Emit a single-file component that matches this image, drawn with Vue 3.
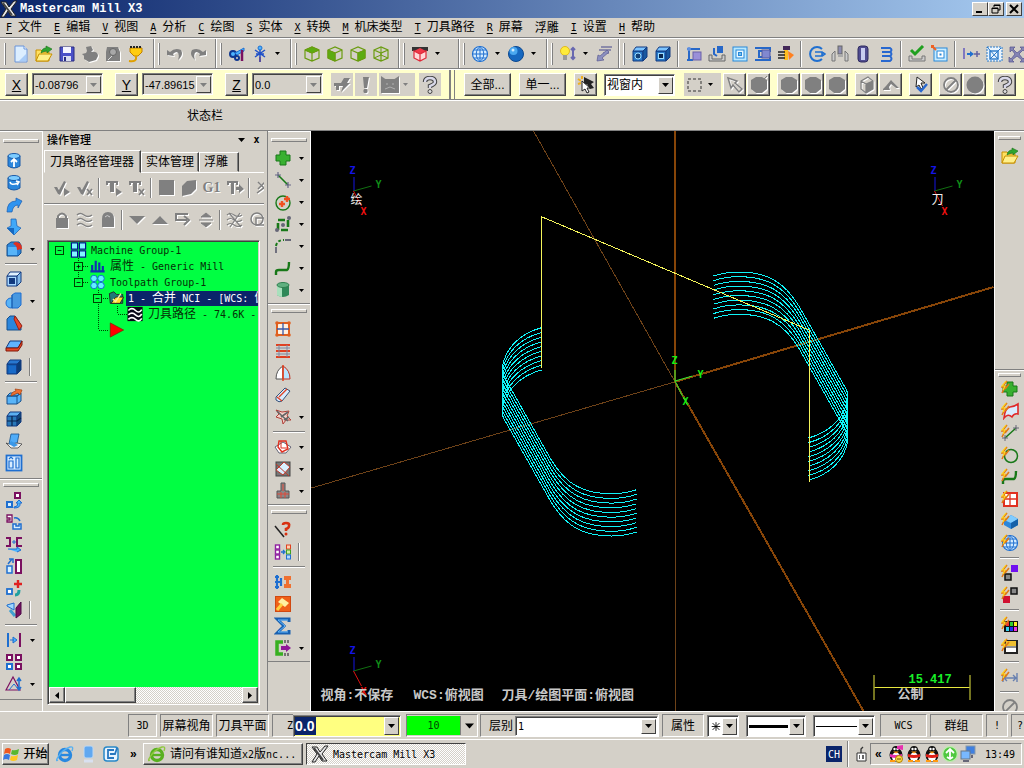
<script setup>
import { h } from 'vue'

const p = (d, fill = 'none', stroke = 'none', w = 1) =>
  `<path d="${d}" fill="${fill}" stroke="${stroke}" stroke-width="${w}"/>`
const c = (x, y, r, fill = 'none', stroke = 'none', w = 1) =>
  `<circle cx="${x}" cy="${y}" r="${r}" fill="${fill}" stroke="${stroke}" stroke-width="${w}"/>`
const r = (x, y, w, ht, fill = 'none', stroke = 'none', sw = 1) =>
  `<rect x="${x}" y="${y}" width="${w}" height="${ht}" fill="${fill}" stroke="${stroke}" stroke-width="${sw}"/>`

const G = '#808080'
const olive = '#6a9c10'
const blue = '#1f6fd0'
const navy = '#123a80'
const sky = '#4db4ff'
const plum = '#7a1060'
const bolt = p('M6 1L1 7H4L1 13M8 4L4 9', 'none', '#e07818', 1.6) + p('M5 1L1 6H4L2 10', 'none', '#ffd820', 1.2)
const wire = (s) => p('M2 5L9 2L16 5V13L9 16L2 13ZM2 5L9 8L16 5M9 8V16', 'none', s, 1.2)
const block = (front, top, side) =>
  p('M2 6H12V16H2Z', front, navy) + p('M2 6L5 2H16L12 6Z', top, navy) + p('M12 6L16 2V12L12 16Z', side, navy)
const cyl = p('M3 4V14Q9 18 15 14V4Z', '#2b86dc', '#1a5aa8') + '<ellipse cx="9" cy="4" rx="6" ry="2.5" fill="#7cccff" stroke="#1a5aa8"/>'
const globe = c(9, 9, 7.5, '#d4ecff', blue, 1.2) + p('M1.500 9H16.500M9 1.500V16.500M3 5H15M3 13H15M9 1.500C4 5 4 13 9 16.500C14 13 14 5 9 1.500', 'none', blue)
const hex = p('M6 1H12L17 4V13L12 17H6L1 13V4Z', G)
const penguin = (scarf) =>
  '<ellipse cx="9" cy="10" rx="6.500" ry="7" fill="#111"/>' + c(9, 5, 4, '#111') +
  '<ellipse cx="9" cy="12" rx="4" ry="4.500" fill="#fff"/>' + c(7.5, 4, 1.2, '#fff') + c(10.5, 4, 1.2, '#fff') +
  p('M6 6.500H12L9 8.500Z', '#ff9a10') + p('M3 9Q9 11 15 9V12Q9 14 3 12Z', scarf) + r(3, 15, 5, 2, '#ff9a10') + r(10, 15, 5, 2, '#ff9a10')
const plus = (col, edge) => p('M6 2H12V6H16V12H12V16H6V12H2V6H6Z', col, edge)

const icons = {
  logo: p('M1 2H6L9 7L14 1H17L11 9L16 16H11L8 11L4 17H1L6 9Z', '#e8e8e8', '#222', 1) + p('M3 3L12 15', 'none', '#444', 2),
  new: p('M3 1H12L15 4V17H3Z', '#dceeff', '#6a94d8') + p('M12 1V4H15', '#fff', '#6a94d8') + p('M7 16L14 9V16Z', '#a8ccf8'),
  open: p('M1 5H6L8 7H14V16H1Z', '#ffe060', '#c89000') + p('M1 16L4 9H17L13 16Z', '#fff08a', '#c89000') + p('M6 8Q7 3 11 3V1L17 4L12 8V6Q9 6 6 8Z', '#2fa52f', '#187018', 0.6),
  save: p('M2 2H16V16H2Z', '#4a50c8', '#2a2c80') + r(5, 2, 8, 6, '#f4f4ff') + r(5, 11, 8, 5, '#d8dcf0') + r(6, 12, 2, 4, '#2a2c80'),
  print: p('M5 2L10 1L12 5L10 7Q17 6 17 11L15 15L8 17L3 14V11L1 9L5 8L6 6Z', G),
  preview: p('M3 2H14L16 7V16H2V7Z', G) + c(9, 7, 3.5, '#a8a8a8', '#666') + p('M4 15L8 11', 'none', '#ddd'),
  trophy: p('M3 3H15V7L11 11H7L3 7Z', '#ffcc10', '#c08000') + p('M4 1V3M7 1V3M10 1V3M13 1V3', 'none', '#222', 2) + p('M9 11V14Q8 17 2 16', 'none', '#e0a000', 2),
  undo: p('M1 10V5L4 7Q9 2 15 5Q18 10 12 15Q14 9 11 7Q9 7 7 9L8 11Z', G),
  redo: p('M17 10V5L14 7Q9 2 3 5Q0 10 6 15Q4 9 7 7Q9 7 11 9L10 11Z', G),
  erase: c(5, 9, 3, sky, '#103890', 2) + c(9, 13, 2, 'none', '#103890', 2) + p('M7 8L16 3V6L9 10Z', sky, blue) + p('M14 5V16', 'none', plum, 2.5),
  analyze: p('M9 2V16M4 5L14 12M14 5L4 12M5 9H13', 'none', '#2050c8', 1.5) + c(9, 3, 2, sky, blue) + p('M9 12V17', 'none', '#5a50a0', 2),
  cube1: wire(olive) + p('M2 5L9 2L16 5L9 8Z', '#5cac10', olive),
  cube2: wire(olive) + p('M2 5L9 8V16L2 13Z', '#5cac10', olive),
  cube3: wire(olive) + p('M9 8L16 5V13L9 16Z', '#5cac10', olive),
  cube4: wire(olive) + p('M2 13L9 10L16 13M9 2V10', 'none', olive),
  redcube: p('M1 2H17V6H1Z', '#333') + p('M3 6L9 3L15 6L9 9Z', '#f03848') + p('M3 6L9 9L15 6V13L9 16L3 13ZM9 9V16', '#ffd8d8', '#e02838', 1.2),
  globe,
  sphere: c(9, 9, 7.5, '#1668c0', '#0c4890') + c(6.5, 6, 4, '#4aa8f0') + c(6, 5, 1.5, '#d0ecff'),
  bulb: c(6, 6, 4.5, '#ffec3a', '#e0b820') + r(4, 10, 4, 5, '#999') + p('M14 3V14M12 5L14 3L16 5M12 12L14 14L16 12', 'none', '#6868b0', 2),
  dims: p('M6 2H17M4 5H16M8 8H14', 'none', '#7474a0', 1.5) + p('M14 7L7 13L9 15L2 16L3 10L5 11L12 5Z', '#8c90c0', '#5a5a90', 0.7),
  boxhole: block('#2878c8', '#7cc4ff', '#1858a0') + c(7, 11, 3, '#124078', '#9cdcff'),
  boxsq: block('#2878c8', '#7cc4ff', '#1858a0') + r(4.5, 8.5, 5, 5, '#0c2850', '#9cdcff'),
  tp1: p('M2 4H15M4 4V15M2 15H8', 'none', '#2868c8', 2) + c(4, 4, 2, '#6090e0') + r(8, 7, 8, 8, '#9a90d8', '#6a60a8'),
  tp2: r(9, 1, 6, 7, '#2868c8') + p('M6 3V9L9 11', 'none', '#2868c8', 2) + p('M1 10H4V14H14V10H17V16H1Z', '#ccc', '#666'),
  tp3: r(2, 2, 14, 14, '#b8e8ff', '#2888d8') + r(5, 5, 8, 8, '#e8f8ff', '#2888d8') + r(7.5, 7.5, 3, 3, '#70c0f0', '#2888d8'),
  tp4: p('M1 3H16V6H5V12H16V15H1', 'none', '#2868c8', 2) + r(8, 5, 8, 8, '#8088d0', '#5058a0'),
  tp5: r(6, 1, 7, 4, '#442858') + p('M9 5V15', 'none', '#ffbe20', 4) + p('M1 7H8M1 10H8M1 13H8', 'none', '#222', 1.5) + p('M11 6L17 10L12 15Z', '#ff8020'),
  lathe1: p('M14 4A7 7 0 1 0 14 14', 'none', blue, 2) + p('M7 7H14V11H7M14 7L17 9L14 11', 'none', blue, 1.6),
  lathe2: r(7, 1, 4, 8, '#8c8cb0', '#666') + p('M7 9H12V12H7Z', '#aaa') + p('M4 6L1 9V16H4ZM14 6L17 9V16H14Z', '#ccc', '#777'),
  lathe3: '<rect x="4" y="1" width="10" height="16" rx="3" fill="#504c90" stroke="#302c60"/>' + r(7, 3, 4, 12, '#c8ccf0'),
  lathe4: p('M4 3H13Q16 5 13 7H5M5 7H13Q16 9 13 11H5M5 11H13Q16 14 13 16H4', 'none', '#2868d0', 2),
  chk: p('M3 5L7 9L15 1', 'none', '#20a020', 3) + p('M1 11H4V14H14V11H17V16H1Z', '#ccc', '#777'),
  spiral: r(3, 3, 13, 13, '#c8ecff', '#2888d8') + r(6, 6, 7, 7, '#fff', '#2888d8') + r(8.5, 8.5, 2, 2, '#2888d8') + p('M1 1L5 5M1 3V1H3', 'none', '#f06020', 2),
  xf1: p('M2 3V14', 'none', '#8078c0', 2) + p('M5 8H8V6L12 9L8 12V10H5Z', blue) + p('M15 6V12M12 9H18', 'none', '#6060a0', 1.5),
  xf2: `<rect x="2" y="2" width="15" height="14" fill="#e8f4ff" stroke="#2878c8" stroke-dasharray="2 1"/>` + r(5, 6, 8, 8, 'none', '#2878c8', 1.4) + p('M2 2L13 14M16 3L5 14', 'none', '#2878c8'),
  xf3: p('M2 2H7L5 4L9 8L14 4L12 2H17V7L15 5L11 9L15 14L17 12V17H12L14 15L9 11L4 15L6 17H1V12L3 14L7 9L4 5L2 7Z', '#8484b4', '#50508c', 0.7),
  fastpt: p('M1 7H8L11 2L17 2L14 7H17L8 16L10 10H6V14H3V10H1Z', G),
  bang: p('M6 1H12L10 12H7Z', G) + c(8.5, 15, 2.2, G),
  face: r(0, 3, 18, 14, G) + p('M0 0L6 4H0ZM18 0L12 4H18Z', G) + p('M5 8H7M11 8H13M4 13L9 11L14 13', 'none', '#b0b0b0'),
  help: p('M4 6Q4 2 9 2Q14 2 14 6Q14 8 9 10V12', 'none', '#444', 4.4) + p('M4 6Q4 2 9 2Q14 2 14 6Q14 8 9 10V12', 'none', '#d8d8e8', 2.4) + c(9, 15.5, 2, '#ddd', '#444'),
  selcur: p('M7 1L17 6L14 8L17 12L13 13L10 8L7 10Z', '#222') + p('M1 3L4 5M5 0L5 3M1 8L4 7', 'none', '#f0b020', 2) + p('M5 5L13 12L10 12L12 16L10 17L8 13L5 15Z', '#fff', '#222'),
  dashbox: '<rect x="2" y="3" width="13" height="12" fill="none" stroke="#333" stroke-dasharray="3 2"/>',
  ptr: p('M2 2L11 5L9 7L16 13L13 16L7 9L5 12Z', 'none', G, 1.5),
  hexa: hex,
  hexb: hex + p('M13 4L17 0', 'none', G),
  disc: c(9, 9, 8.5, G),
  wireg: p('M3 5L10 1L15 5V13L8 17L3 13ZM3 5L8 8L15 5M8 8V17', 'none', G, 1.2) + p('M8 8L15 5V13L8 17Z', G),
  bend: p('M1 13L4 10L9 4L17 12H14L9 8L7 11L8 14H1Z', G),
  selok: p('M5 1L13 7H9L11 12L9 13L7 9L4 11Z', '#fff', '#222') + p('M5 11L9 15L15 8', 'none', '#2868d0', 2.5),
  ban: c(9, 9, 7, 'none', G, 1.8) + p('M4 14L14 4', 'none', G, 1.8),
  extrude: cyl + p('M9 15V7M6 10L9 7L12 10', 'none', '#fff', 1.8),
  revolve: cyl + p('M5 8Q6 12 13 9M11 7L14 8L12 11', 'none', '#fff', 1.6),
  sweep: p('M2 16Q2 5 11 5V2L17 5L13 12V9Q8 9 7 16Z', '#2f94f0', '#1a5cb0', 0.7),
  loft: p('M6 1H11L12 8L16 10L9 17L2 10L6 8Z', '#40a8f8', '#1a5cb0', 0.7) + p('M2 10H9V17Z', '#1668c0'),
  fillet: p('M2 5L6 2H14L16 5V13L13 16H2Z', '#2b86dc', '#16508c') + r(3, 7, 9, 8, '#58b4f8') + p('M10 2Q17 2 17 9L12 10Q12 5 8 4Z', '#e03020'),
  shell: block('#a8d8ff', '#e0f2ff', '#80b8e8') + r(5, 9, 4, 4, '#103878', navy, 2),
  bool: c(6, 11, 5, '#58b4f8', blue) + p('M7 3L10 1H16V13L13 16H7Z', '#4898e0', blue) + p('M7 3V16', 'none', '#1a5ca8'),
  chamfer: p('M2 5L5 2H10L16 11V16H2Z', '#2b86dc', '#16508c') + p('M10 2L17 12L14 16L9 5Z', '#e84828', '#a02010'),
  draft: p('M1 12L5 5H17L13 12Z', '#60b4ff', navy) + p('M1 12H13L17 5V9L13 15H1Z', '#e84828', '#801808'),
  solidbox: block('#1060b8', '#2878d0', '#0c3c78') + r(4, 8, 7, 7, '#186ac8'),
  boxarrow: p('M2 8H12V16H2ZM2 8L5 5H16L12 8ZM12 8L16 5V13L12 16', '#58b4f8', '#16508c') + p('M6 8Q6 4 11 3L10 1L17 2L15 7L13 5Z', '#f07030', '#a04010', 0.7),
  grid3: block('#2878b8', '#5cb0f0', '#144878') + p('M2 11H12L16 8M7 6V16', 'none', '#0a2448', 1.2),
  sheet: p('M6 2H14L12 12H4Z', '#50acf8', '#16508c', 0.8) + p('M4 12L1 11L6 16L13 16L17 12L12 11Z', '#f0f0f0', '#444', 0.8) + p('M6 9L13 13L9 15L4 12Z', '#3a98e8'),
  drawing: r(1.5, 1.500, 15, 15, '#d8ecff', blue, 1.8) + p('M4 7H8V14H4ZM11 4H14V14H11ZM4 5L6 3L8 5', 'none', blue, 1.2),
  tr1: r(10, 2, 5, 5, '#fff', plum, 2) + r(2, 11, 5, 5, '#d8f0ff', blue, 2) + p('M9 16Q13 16 13 12H11L14 9L17 12H15Q16 17 9 17Z', sky, blue),
  tr2: p('M2 2H7V9H2V7H5V5H2Z', '#fff', plum, 1.3) + p('M9 5Q13 4 15 8', 'none', blue, 1.5) + p('M8 11H11V13H14V11H16V16H8Z', '#d8f0ff', blue, 1.5),
  tr3: p('M1 3H5V11H1M17 3H12V11H17', 'none', plum, 2) + p('M7 7H11M9 5V9', 'none', blue) + p('M3 14H12V12L16 15L12 17', sky, blue),
  tr4: r(11, 3, 5, 13, '#fff', plum, 2) + r(2, 9, 5, 7, '#d8f0ff', blue, 1.5) + p('M3 7L7 2M4 2H8V6', 'none', blue, 1.5),
  tr5: r(2, 10, 5, 5, '#fff', blue, 1.8) + p('M10 16Q14 16 14 11', 'none', '#20a0a0', 3) + p('M13 1V9M9 5H17', 'none', '#e02020', 2.4),
  tr6: p('M2 4L9 2V9L2 5Z', '#a0d8ff', blue) + p('M5 9L10 15', 'none', '#40a0d0', 3) + p('M11 7L16 1V13L11 17Z', plum, '#4a0848'),
  tr7: p('M3 2V16', 'none', blue, 2) + p('M15 2V16', 'none', plum, 2) + p('M5 9H9M8 6L12 9L8 12Z', sky, blue),
  tr8: r(2, 2, 5, 5, '#fff', plum, 2) + r(11, 2, 5, 5, '#fff', plum, 2) + r(2, 11, 5, 5, '#fff', blue, 2) + r(11, 11, 5, 5, '#fff', plum, 2),
  tr9: p('M1 15L8 2L15 15Z', 'none', plum, 1.2) + p('M4 15L9 9L14 15', 'none', blue) + p('M14 3V14M12 6L14 3L16 6M12 12L14 15L16 12', 'none', blue, 1.5),
  plus: plus('#38b030', '#187818'),
  line: p('M4 4L14 14', 'none', '#187818', 1.6) + p('M4 1V7M1 4H7M14 11V17M11 14H17', 'none', '#666688', 1.2),
  circle: c(9, 10, 7, 'none', '#187818', 1.4) + p('M8 8V14M5 11H11M13 3V9M10 6H16', 'none', '#f05020', 2.4),
  rect: `<rect x="4" y="5" width="10" height="10" fill="none" stroke="#187818" stroke-width="2.6" stroke-dasharray="7 3"/>` + c(3, 15, 2, '#667') + c(15, 3, 2, '#667') + c(9, 10, 2, '#667'),
  arc: p('M2 16V10M11 3H17', 'none', '#667', 1.8) + `<path d="M2 9Q3 3 10 3" fill="none" stroke="#187818" stroke-width="2" stroke-dasharray="3 2"/>`,
  spline: p('M2 16V13Q2 11 5 11H13Q15 10 15 3', 'none', '#187818', 2.4),
  cylg: p('M3 4V14Q9 18 15 14V4Z', '#2f8858') + p('M3 4V14Q5 16 8 16V4Z', '#a8e0bc') + '<ellipse cx="9" cy="4" rx="6" ry="2.5" fill="#60b080" stroke="#308050"/>',
  net: p('M3 3H15V15H3Z', '#fff0e0', '#e06020', 2) + p('M3 9H15M9 3V15', 'none', '#3858a8', 1.3) + [3, 15].map((x) => c(x, 3, 1.8, '#e06020') + c(x, 15, 1.8, '#e06020')).join(''),
  ruled: p('M2 3H16M2 9H16M2 15H16', 'none', '#e04020', 2) + p('M2 6H16M2 12H16M5 3V15M13 3V15', 'none', '#8088a0'),
  rev: p('M9 2Q2 6 2 15H9Z', '#fff', '#555') + p('M9 2Q16 6 16 15H9Z', '#b8e4ff', '#c03020') + p('M9 1V17', 'none', '#e04020', 1.5),
  sweepS: p('M2 11L11 2L16 5L8 15Q5 17 2 14Z', '#d8ecff', '#345078') + p('M5 11L13 3M8 15L3 11', 'none', '#e04020', 1.3),
  surf: p('M2 2L8 4L15 3L13 8L17 12L12 12L9 16L8 11L2 9L5 6Z', '#f4d0c8', '#b04038') + p('M3 3L8 8L14 13M14 4L7 9M10 12L15 9', 'none', '#666', 1.6),
  trim: p('M1 9L9 4L17 9L12 15H5Z', '#fff', '#667') + p('M5 3H12L14 11L8 14L4 9Z', 'none', '#e03020', 1.4) + p('M7 3V10H13', 'none', '#e03020'),
  ext: r(2, 2, 14, 14, '#777', '#444') + p('M2 10L10 2L16 7L9 15Z', '#d8f0ff', '#c03828') + p('M2 4L15 16', 'none', '#c03828'),
  blend: p('M7 1H11V9H15V16H3V9H7Z', '#888', '#555') + p('M9 2V9M3 12H15M7 10V16M11 10V16', 'none', '#e04838'),
  qline: p('M1 5L10 16', 'none', '#222', 1.5) + p('M9 4Q9 2 12 2Q16 2 15 5Q15 7 12 8V10', 'none', '#d83010', 2.6) + c(12, 13, 1.5, '#d83010'),
  xfer: [2, 7, 12].map((y) => r(1.5, y, 4, 4, '#fff', '#9020a0', 1.4)).join('') + r(12.5, 2, 4, 4, '#ffd0b0', '#e04020') + r(12.5, 7, 4, 4, '#d0f0a0', '#40a020') + r(12.5, 12, 4, 4, '#b0d8ff', blue) + p('M7 9H10M9 7L11 9L9 11', 'none', blue, 1.3),
  machine: p('M3 2V16M1 4H5M1 9H8M1 14H5M7 5V13', 'none', blue, 2.2) + p('M10 3H17V7H15V11H17V15H10V11H12V7H10Z', '#f07030'),
  hammer: r(1.5, 1.5, 15, 15, '#f06018', '#d04810') + p('M8 3L15 8L11 12L4 7Z', '#fff0a0') + p('M8 9L3 15', 'none', '#ffd040', 3),
  sigma: p('M15 5V2H3L10 9L3 16H15V13', 'none', '#1860b0', 3) + p('M14 3H4L11 9L4 15H14', 'none', '#60b8ff', 1),
  clamp: p('M9 3H3V15H9', 'none', '#38b020', 3.5) + p('M7 7H12V5L17 9L12 13V11H7Z', '#901898') + p('M11 1V4M14 1V4M11 14V17M14 14V17', 'none', '#555', 1.5),
  qplus: plus('#38b030', '#187818') + bolt,
  qsurf: p('M3 16Q4 6 9 5Q13 5 17 2V12Q13 11 11 15Q7 11 3 16Z', '#d8ecff', '#e02828', 1.6) + bolt,
  qseg: p('M4 14L15 4', 'none', '#187818', 1.5) + p('M15 1V7M12 4H18M4 11V17M1 14H7', 'none', '#667') + bolt,
  qcirc: c(10, 10, 6.5, 'none', '#187818', 1.5) + bolt,
  qspl: p('M2 16V13Q2 11 5 11H13Q15 10 15 3', 'none', '#187818', 2.4) + bolt,
  qnet: r(3, 3, 13, 13, '#fff', '#e03020', 2) + p('M3 9H16M9 3V16', 'none', '#e03020', 1.3) + bolt,
  qsolid: p('M3 8L10 3L17 7V13L10 17L3 13Z', '#2b86dc') + p('M3 8L10 11L17 7L10 3Z', '#80ccff') + p('M10 11L17 7V13L10 17Z', '#1560a8') + bolt,
  qglobe: globe + bolt,
  qcol: r(10, 1, 7, 7, '#7010f0') + r(4, 10, 6, 6, '#888', '#111', 1.5) + bolt,
  qcol2: r(10, 2, 6, 6, '#888', '#111', 1.5) + r(2, 10, 7, 7, '#d01030') + bolt,
  palette: r(3, 5, 14, 11, '#111') + [['#f03030', 5, 6], ['#30d030', 9, 6], ['#ffee20', 13, 6], ['#30d0f0', 5, 11], ['#2030f0', 9, 11], ['#f030e0', 13, 11]].map(([f, x, y]) => r(x, y, 3, 4, f)).join('') + bolt,
  levels: r(4, 3, 12, 12, '#fff', '#222', 2) + r(5, 3, 10, 5, '#f0c030') + p('M4 9H16', 'none', '#222') + bolt,
  qdim: p('M2 5V14M16 5V14M3 10H15M6 7L3 10L6 13M12 7L15 10L12 13', 'none', '#6880b0', 1.4) + bolt,
  chkall: p('M1 8H4L6 11L11 2L13 3L7 16L5 15Z', G) + p('M11 9L17 13L11 17Z', G),
  chknone: p('M1 8H4L6 11L11 2L13 3L7 16L5 15Z', G) + p('M11 10L16 16M16 10L11 16', 'none', G, 1.8),
  regen: p('M1 2H13V6H11V4H9V13H5V4H3V6H1Z', G) + p('M11 9L17 13L11 17Z', G),
  regenx: p('M1 2H13V6H11V4H9V13H5V4H3V6H1Z', G) + p('M11 10L16 16M16 10L11 16', 'none', G, 1.8),
  back: r(2, 1, 15, 15, G),
  verify: p('M2 7L7 2L16 1V10L11 15L2 17Z', G),
  post: p('M1 2H12V6H10V4H8V15H5V4H3V6H1Z', G) + p('M10 8H13V5L18 10L13 14V11H10Z', G),
  star: p('M3 3L10 10M10 3L3 10M2 14L10 8', 'none', G, 1.5),
  lock: p('M5 8V5Q9 0 13 5V8', 'none', G, 2) + r(3, 7, 12, 10, G),
  waves: p('M1 4Q4 1 8 4T16 4M1 9Q4 6 8 9T16 9M1 14Q4 11 8 14T16 14', 'none', G, 1.5),
  ghost: p('M3 8Q3 1 9 1Q15 1 15 8V16H3Z', G) + p('M6 6Q8 3 11 6', 'none', '#ccc'),
  down: p('M1 5H17L9 13Z', G),
  up: p('M1 13H17L9 5Z', G),
  insert: p('M14 3H2V9H13M10 5L15 9L10 14', 'none', G, 2),
  updown: p('M9 2L14 6H4ZM9 16L14 12H4ZM2 9H16', G, G),
  wavex: p('M1 4Q4 1 8 4T16 4M1 9Q4 6 8 9T16 9M1 14Q4 11 8 14T16 14M3 2L15 16M14 2L4 16', 'none', G, 1.2),
  circsq: c(8, 8, 6, 'none', G, 1.5) + r(7, 7, 9, 7, 'none', G, 1.5),
  group4: [1, 10].map((x) => [1, 10].map((y) => r(x, y, 7, 7, '#80f8ff', '#000890', 1.3)).join('')).join(''),
  bars: p('M3 8V15M7 3V15M11 5V15M15 9V15M1 15H17', 'none', '#1030b0', 2.4),
  rounds: [5, 13].map((x) => [5, 13].map((y) => c(x, y, 3.6, '#60f0ff', '#1060d0')).join('')).join(''),
  folder: p('M1 4L6 2L9 5H16V15H2Z', '#207878', '#222') + p('M3 15L8 8H17L13 15Z', '#ffe030', '#222') + p('M5 10L8 13L14 4', 'none', '#fff0a0', 1.6),
  nci: r(0, 1, 17, 16, '#080818') + p('M1 5Q5 1 9 5T16 4M1 10Q5 6 9 10T16 9M1 15Q5 11 9 15T16 14', 'none', '#fff', 1.8),
  play: p('M2 1L17 9L2 17Z', '#f00', '#802000', 0.8),
  win: p('M2 4Q5 2 8 4L7 9Q4 7 1 9Z', '#f05820') + p('M9 5Q12 6 16 4L15 9Q12 11 8 9Z', '#58b830') + p('M1 10Q4 8 7 10L6 15Q3 13 0 15Z', '#3878e0') + p('M8 11Q11 12 15 10L14 15Q10 17 7 15Z', '#ffc820'),
  ie: c(9, 10, 5.5, 'none', '#2888e0', 3.4) + p('M5 10H15', 'none', '#2888e0', 2.4) + p('M2 15Q-1 17 2 12Q6 5 14 2Q18 1 16 6', 'none', '#58b0f0', 1.4),
  ieg: c(9, 10, 5.5, 'none', '#58b020', 3.4) + p('M5 10H15', 'none', '#58b020', 2.4) + p('M2 15Q-1 17 2 12Q6 5 14 2Q18 1 16 6', 'none', '#90c840', 1.4),
  desk: '<rect x="5" y="1" width="9" height="12" rx="2" fill="#60a8f0" stroke="#c0d8f0"/>' + p('M5 16H14', 'none', '#d8e0f0', 3),
  mail: '<rect x="2" y="2" width="14" height="14" rx="3" fill="#e8f4ff" stroke="#2888c8" stroke-width="1.5"/>' + p('M12 5H6V13H12M8 9H13L15 3', 'none', '#2878c0', 1.8),
  usb: p('M5 8H14V16H5Z', '#fff', '#333') + p('M9 8V4L11 2M7 11H8M10 11H12M7 13H8M10 13H12', 'none', '#333', 1.3),
  qq1: penguin('#e830b0') + c(12, 14, 3.5, '#ffd84a', '#b08000') + p('M10 14H14', 'none', '#705000') + p('M10 1L16 0V5L10 4Z', '#e830b0'),
  qq: penguin('#e02018'),
  shield: c(9, 9, 7.500, '#50c840', '#c0e8b0', 1.5) + p('M9 4V14M5 8L9 4L13 8M6 12L9 14L12 12', 'none', '#fff', 1.8),
  netpc: r(7, 1, 9, 8, '#4080e0', '#89a') + r(2, 6, 9, 8, '#78b8ff', '#678') + p('M4 16H10M13 10V13', 'none', '#667', 2),
}

const Ico = (props) => h('svg', { class: 'ico', viewBox: '0 0 18 18', 'aria-hidden': 'true', innerHTML: icons[props.n] })
Ico.props = ['n']
const Arrow = () => h('svg', { class: 'tri', viewBox: '0 0 7 4', 'aria-hidden': 'true' }, [h('path', { d: 'M0 0H7L3.500 4Z', fill: 'currentColor' })])
/* Latin runs use the half-width face, Chinese runs the full-width one. */
const Mix = (props) => h('span', { class: 'mix' }, String(props.t).split(/([\x20-\x7e]+)/).filter(Boolean).map((s) => (/[\x20-\x7e]/.test(s) ? h('span', { class: 'lat' }, s) : s)))
Mix.props = ['t']

const menus = [['F', '文件'], ['E', '编辑'], ['V', '视图'], ['A', '分析'], ['C', '绘图'], ['S', '实体'], ['X', '转换'], ['M', '机床类型'], ['T', '刀具路径'], ['R', '屏幕'], ['', '浮雕'], ['I', '设置'], ['H', '帮助']]
/* "v" is a drop-down arrow, "|" a separator */
const topGroups = [
  { items: 'new open save ~print ~preview trophy' },
  { items: '~undo ~redo' },
  { items: 'erase analyze v' },
  { items: 'cube1 cube2 cube3 cube4' },
  { items: 'redcube v', wide: true },
  { items: 'globe v sphere v' },
  { items: 'bulb v dims', tight: true },
  { items: 'boxhole boxsq | tp1 tp2 tp3 tp4 tp5 | lathe1 lathe2 lathe3 lathe4 | chk spiral | xf1 xf2 xf3' },
].map((g) => ({ ...g, items: g.items.split(' ') }))
const bar = (...s) => s.map((g) => g.split(' '))
const leftBar = bar('extrude revolve sweep loft fillet+ | shell bool+ chamfer draft solidbox | boxarrow grid3 sheet drawing', 'tr1 tr2 tr3 tr4 tr5 tr6 | tr7+ tr8 tr9+')
const midBar = bar('plus+ line+ circle+ rect+ arc+ spline+ cylg+', 'net ruled rev sweepS surf+ | trim+ ext+ blend+', 'qline xfer | machine hammer sigma clamp+')
const rightBar = bar('open', 'qplus qsurf qseg qcirc qspl qnet qsolid qglobe | qcol qcol2 | palette levels | qdim | ~ban')
const coords = [['X', '-0.08796'], ['Y', '-47.89615'], ['Z', '0.0']]
const selTools = [['~ptr', '~hexb'], ['~hexa', '~hexa', '~hexa'], ['~wireg', '~bend'], ['selok'], ['~ban', '~disc'], ['help']]
const opRows = ['chkall chknone | regen regenx | back verify G1 post | star', 'lock waves ghost | down up insert updown | wavex circsq'].map((s) => s.split(' '))
const tree = [
  { lv: 0, ex: '-', ic: 'group4', t: 'Machine Group-1' },
  { lv: 1, ex: '+', ic: 'bars', t: '属性 - Generic Mill' },
  { lv: 1, ex: '-', ic: 'rounds', t: 'Toolpath Group-1' },
  { lv: 2, ex: '-', ic: 'folder', t: '1 - 合并 NCI - [WCS: 俯', sel: true },
  { lv: 3, ex: '', ic: 'nci', t: '刀具路径 - 74.6K -' },
  { lv: 2, ex: '', ic: 'play', t: '' },
]
const passes = Array.from({ length: 10 }, (_, i) => i * 4.7)
const passD = 'M713 276C722 273 730 272 738 272C765 272 783 280 799 307L846 390C848 394 847 400 846 404C842 418 830 432 808 438'
const gnomons = [{ x: 353, y: 191, t: '绘' }, { x: 934, y: 191, t: '刀' }, { x: 353, y: 671, t: '' }]
const clean = (s) => s.replace(/[~+]/g, '')
</script>

<template>
  <div class="app">
    <header class="title">
      <Ico n="logo" /><h1>Mastercam Mill X3</h1>
      <div class="winbtns">
        <button aria-label="最小化"><svg viewBox="0 0 10 10"><path d="M1 8H7" stroke="#000" stroke-width="2" /></svg></button>
        <button aria-label="还原"><svg viewBox="0 0 10 10"><path d="M3 1H9V6H7M3 1V3M3 1.500H9M1 4H7V9H1ZM1 4.500H7" fill="none" stroke="#000" /></svg></button>
        <button class="close" aria-label="关闭"><svg viewBox="0 0 10 10"><path d="M1 1L9 9M9 1L1 9" stroke="#000" stroke-width="2" /></svg></button>
      </div>
    </header>

    <nav class="menu">
      <button v-for="m in menus" :key="m[1]"><template v-if="m[0]"><u class="lat">{{ m[0] }}</u><span class="lat">&nbsp;</span></template>{{ m[1] }}</button>
    </nav>

    <div class="tools">
      <div v-for="(g, i) in topGroups" :key="i" class="tgroup" :class="{ wide: g.wide, tight: g.tight }">
        <i class="grip"></i>
        <template v-for="(it, j) in g.items" :key="j">
          <i v-if="it === '|'" class="vsep"></i>
          <button v-else-if="it === 'v'" class="dd" aria-label="展开"><Arrow /></button>
          <button v-else class="tb" :class="{ emb: it[0] === '~' }" :aria-label="clean(it)"><Ico :n="clean(it)" /></button>
        </template>
      </div>
    </div>

    <div class="ribbon">
      <div v-for="q in coords" :key="q[0]" class="coord">
        <button class="raised key" :aria-label="'锁定 ' + q[0]"><u>{{ q[0] }}</u></button>
        <div class="combo">
          <input :value="q[1]" :aria-label="q[0]" />
          <button class="drop off" aria-label="展开"><Arrow /></button>
        </div>
      </div>
      <div class="flats">
        <button class="flat emb" aria-label="快速点"><Ico n="fastpt" /></button>
        <button class="flat emb" aria-label="提示"><Ico n="bang" /></button>
        <span class="flat pair"><button class="emb" aria-label="捕捉"><Ico n="face" /></button><button class="dd off" aria-label="展开"><Arrow /></button></span>
        <button class="flat" aria-label="帮助"><Ico n="help" /></button>
      </div>
      <i class="split"></i>
      <button class="raised word">全部...</button>
      <button class="raised word">单一...</button>
      <button class="raised sq pick" aria-label="选择"><Ico n="selcur" /></button>
      <div class="combo white">
        <select aria-label="窗选方式"><option>视窗内</option></select>
        <span class="drop"><Arrow /></span>
      </div>
      <span class="flat pair dash"><button aria-label="窗选"><Ico n="dashbox" /></button><button class="dd" aria-label="展开"><Arrow /></button></span>
      <div v-for="(g, i) in selTools" :key="i" class="selgroup">
        <button v-for="(s, j) in g" :key="j" class="raised sq" :class="{ emb: s[0] === '~' }" :aria-label="clean(s)"><Ico :n="clean(s)" /></button>
      </div>
    </div>

    <div class="hint">状态栏</div>

    <main>
      <aside class="vbar left">
        <section v-for="(s, i) in leftBar" :key="i">
          <i class="hgrip"></i>
          <template v-for="(it, j) in s" :key="j">
            <i v-if="it === '|'" class="hsep"></i>
            <div v-else class="vcell">
              <button class="tb" :aria-label="clean(it)"><Ico :n="clean(it)" /></button>
              <button v-if="it.endsWith('+')" class="dd" aria-label="展开"><Arrow /></button>
              <i v-else-if="it === 'solidbox' || it === 'tr6'" class="tick"></i>
            </div>
          </template>
        </section>
      </aside>

      <section class="ops">
        <div class="opshead"><h2>操作管理</h2><button aria-label="菜单"><Arrow /></button><button class="x" aria-label="关闭">x</button></div>
        <div class="tabs"><button class="on">刀具路径管理器</button><button>实体管理</button><button>浮雕</button></div>
        <div v-for="(row, i) in opRows" :key="i" class="oprow">
          <template v-for="(it, j) in row" :key="j">
            <i v-if="it === '|'" class="vsep"></i>
            <button v-else-if="it === 'G1'" class="tb emb g1">G1</button>
            <button v-else class="tb emb" :aria-label="it"><Ico :n="it" /></button>
          </template>
        </div>
        <div class="treebox">
          <div class="tree">
            <svg class="wires" width="90" height="100" viewBox="0 0 90 100" aria-hidden="true">
              <path d="M29.500 16V40M30 24.500H40M30 40.500H40M49.500 48V88M50 56.500H60M50 88.500H60M68.500 64V72M69 72.500H80" fill="none" stroke="#004000" stroke-dasharray="1 1" />
            </svg>
            <div v-for="(n, i) in tree" :key="i" class="node" :class="'lv' + n.lv">
              <span class="ex"><button v-if="n.ex" :aria-label="n.ex === '+' ? '展开' : '折叠'"><svg viewBox="0 0 9 9"><path :d="n.ex === '+' ? 'M2 4.500H7M4.500 2V7' : 'M2 4.500H7'" stroke="#000" /></svg></button></span>
              <Ico :n="n.ic" />
              <span v-if="n.t" class="lab" :class="{ sel: n.sel }"><Mix :t="n.t" /></span>
            </div>
          </div>
          <div class="scroll">
            <button class="raised" aria-label="向左"><svg viewBox="0 0 4 7"><path d="M4 0V7L0 3.500Z" /></svg></button>
            <div class="thumb raised"></div>
            <i></i>
            <button class="raised" aria-label="向右"><svg viewBox="0 0 4 7"><path d="M0 0V7L4 3.500Z" /></svg></button>
          </div>
        </div>
      </section>

      <aside class="vbar mid">
        <section v-for="(s, i) in midBar" :key="i">
          <i class="hgrip"></i>
          <template v-for="(it, j) in s" :key="j">
            <i v-if="it === '|'" class="hsep"></i>
            <div v-else class="vcell">
              <button class="tb" :aria-label="clean(it)"><Ico :n="clean(it)" /></button>
              <button v-if="it.endsWith('+')" class="dd" aria-label="展开"><Arrow /></button>
              <i v-else-if="it === 'xfer'" class="tick"></i>
            </div>
          </template>
        </section>
      </aside>

      <div class="view">
        <svg viewBox="311 131 682 580" role="img" aria-label="刀具路径">
          <g fill="none" shape-rendering="crispEdges">
            <path d="M533 131L674 381M674.500 381V711M311 488L674 382" stroke="#6e4218" />
            <path d="M674 131V381M674 382L993 287M674 381L863 711" stroke="#874508" stroke-width="2" />
          </g>
          <g fill="none" stroke="#10f4f8" stroke-width="1" shape-rendering="crispEdges">
            <path v-for="d in passes" :key="d" :d="passD" :transform="`translate(0 ${d})`" />
            <g transform="rotate(180 674.500 404)"><path v-for="d in passes" :key="d" :d="passD" :transform="`translate(0 ${d})`" /></g>
          </g>
          <path d="M540.500 368V216.500L808.500 330V482" fill="none" stroke="#f4f45a" shape-rendering="crispEdges" />
          <path d="M674.500 370V381L692 376M674.500 381L682 396" fill="none" stroke="#2cf02c" />
          <g class="ax" fill="#14f014"><text x="674" y="360">Z</text><text x="700" y="374">Y</text><text x="685" y="401">X</text></g>
          <g v-for="(g, i) in gnomons" :key="i" class="ax" :transform="`translate(${g.x} ${g.y})`" fill="none">
            <path d="M0.500 -14V0" stroke="#1414e0" /><path d="M0 0L18 -5" stroke="#107010" /><path d="M0 0L8 15" stroke="#e01010" />
            <text x="-1" y="-21" fill="#1414e8">Z</text><text x="25" y="-7" fill="#109018">Y</text><text x="10" y="20" fill="#f01010">X</text>
            <text class="cn" x="3" y="7" fill="#f0f0f0">{{ g.t }}</text>
          </g>
          <g class="info" fill="#c8c8c8"><text x="320" y="699">视角:不保存</text><text x="413" y="699">WCS:俯视图</text><text x="501" y="699">刀具/绘图平面:俯视图</text><text x="897" y="698">公制</text></g>
          <text class="len" x="908" y="683" fill="#18f028">15.417</text>
          <path d="M873.500 675V700M969.500 675V700M874 687.500H969" stroke="#e8e840" fill="none" />
        </svg>
      </div>

      <aside class="vbar right">
        <section v-for="(s, i) in rightBar" :key="i">
          <i class="hgrip"></i>
          <template v-for="(it, j) in s" :key="j">
            <i v-if="it === '|'" class="hsep"></i>
            <div v-else class="vcell"><button class="tb" :aria-label="clean(it)"><Ico :n="clean(it)" /></button></div>
          </template>
        </section>
      </aside>
    </main>

    <div class="status">
      <button class="cell c3d"><Mix t="3D" /></button>
      <button class="cell c4">屏幕视角</button>
      <button class="cell c4">刀具平面</button>
      <label class="cell cz" for="depth"><Mix t="Z" /></label>
      <div class="combo depth"><span class="yl"><input id="depth" value="0.0" /></span><button class="drop" aria-label="展开"><Arrow /></button></div>
      <div class="cell color"><button class="green"><Mix t="10" /></button><button class="dd" aria-label="颜色"><Arrow /></button></div>
      <div class="cell level"><label for="level">层别</label>
        <div class="combo white"><input id="level" class="mono" value="1" /><button class="drop" aria-label="展开"><Arrow /></button></div>
      </div>
      <button class="cell attr">属性</button>
      <button class="combo white pt" aria-label="点型"><svg viewBox="0 0 14 16"><path d="M7 3V13M2 8H12M3 4L11 12M11 4L3 12" stroke="#000" /></svg><span class="drop"><Arrow /></span></button>
      <button class="combo white ln" aria-label="线型"><i class="thick"></i><span class="drop"><Arrow /></span></button>
      <button class="combo white ln wd" aria-label="线宽"><i></i><span class="drop"><Arrow /></span></button>
      <button class="cell wcs"><Mix t="WCS" /></button>
      <button class="cell grp">群组</button>
      <button class="cell ex1"><Mix t="!" /></button>
      <button class="cell ex1 last"><Mix t="?" /></button>
    </div>

    <footer class="task">
      <button class="raised start"><Ico n="win" />开始</button>
      <div class="quick"><button aria-label="浏览器"><Ico n="ie" /></button><button aria-label="桌面"><Ico n="desk" /></button><button aria-label="邮件"><Ico n="mail" /></button><b>»</b></div>
      <button class="raised app1"><Ico n="ieg" /><Mix t="请问有谁知道x2版nc..." /></button>
      <button class="app1 active"><Ico n="logo" /><Mix t="Mastercam Mill X3" /></button>
      <span class="ch"><Mix t="CH" /></span><i class="vsep"></i>
      <Ico n="usb" />
      <div class="tray"><b>«</b><Ico n="qq1" /><Ico n="qq" /><Ico n="qq" /><Ico n="shield" /><Ico n="netpc" /><time><Mix t="13:49" /></time></div>
    </footer>
  </div>
</template>

<style>
body { margin: 0; overflow: hidden; }
.ico { width: 18px; height: 18px; display: block; flex: none; }
.tri { width: 5px; height: 3px; display: block; }
.mix { white-space: pre; }
.lat { font-family: "DejaVu Sans Mono", monospace; font-size: 10px; }
</style>

<style scoped>
.app { height: 100vh; display: flex; flex-direction: column; background: #d4d0c8; color: #000; font: 12px/16px "Liberation Sans", "Noto Sans CJK SC", sans-serif; overflow: hidden; }
button { font: inherit; color: inherit; background: none; border: 0; padding: 0; white-space: nowrap; }
input, select { font: inherit; color: inherit; border: 0; padding: 0; margin: 0; background: none; min-width: 0; appearance: none; outline: 0; border-radius: 0; }
h1, h2 { margin: 0; }
.raised { background: #d4d0c8; border: 1px solid; border-color: #fff #404040 #404040 #fff; box-shadow: inset -1px -1px #808080; box-sizing: border-box; display: flex; align-items: center; justify-content: center; }
.emb :deep(svg) { filter: drop-shadow(1px 1px 0 #fff); }

.title { height: 18px; display: flex; align-items: center; padding-right: 2px; color: #fff; background: linear-gradient(90deg, #0a246a, #a6caf0); flex: none; }
.title h1 { flex: 1; margin-left: 2px; font: bold 12px/18px "Liberation Mono", monospace; }
.winbtns { display: flex; }
.winbtns button { width: 16px; height: 14px; box-sizing: border-box; display: grid; place-items: center; background: #d4d0c8; border: 1px solid; border-color: #fff #404040 #404040 #fff; }
.winbtns svg { width: 10px; height: 10px; }
.winbtns .close { margin-left: 2px; }

.menu { height: 20px; flex: none; display: flex; align-items: center; border-bottom: 1px solid #808080; box-sizing: border-box; }
.menu button { padding: 0 6px; }
.menu u { text-underline-offset: 2px; }

.tools { height: 31px; flex: none; display: flex; border-top: 1px solid #fff; box-sizing: border-box; border-bottom: 1px solid #808080; }
.tgroup { display: flex; align-items: center; padding-right: 6px; border-right: 1px solid #808080; box-shadow: 1px 0 #fff; flex: none; }
.tgroup.wide { padding-right: 14px; }
.tgroup.tight { padding-right: 3px; }
.tgroup:last-child { border: 0; padding: 0; }
.grip { width: 2px; height: 22px; margin: 0 3px 0 4px; background: #fff; border-right: 1px solid #808080; box-sizing: border-box; }
.tb { width: 23px; height: 22px; display: grid; place-items: center; flex: none; }
.dd { width: 13px; height: 22px; display: grid; place-items: center; flex: none; }
.vsep { width: 2px; height: 26px; margin: 0 3px; box-sizing: border-box; background: #808080; border-right: 1px solid #fff; flex: none; }
.off { color: #808080; }

.ribbon { height: 31px; flex: none; display: flex; align-items: center; background: #ffffcc; box-sizing: border-box; border-bottom: 1px solid #808080; border-top: 1px solid #fff; padding-left: 5px; }
.coord { display: flex; gap: 4px; margin-right: 12px; flex: none; }
.coord input { font-size: 11px; }
.key { width: 23px; height: 23px; font-size: 14px; }
.combo { display: flex; width: 71px; height: 22px; box-sizing: border-box; border: 1px solid; border-color: #808080 #fff #fff #808080; box-shadow: inset 1px 1px #404040; padding: 2px 1px 1px 2px; background-color: #d4d0c8; }
.combo input, .combo select { flex: 1; width: 10px; }
.white { background-color: #fff; }
.drop { width: 15px; flex: none; display: grid; place-items: center; background: #d4d0c8; border: 1px solid; border-color: #fff #404040 #404040 #fff; box-sizing: border-box; pointer-events: none; }
.drop :deep(svg), .status .dd :deep(svg) { width: 7px; height: 4px; }
.flats { display: flex; gap: 2px; margin-left: -4px; }
.flat { width: 22px; height: 23px; display: flex; align-items: center; justify-content: center; background: #d4d0c8; }
.pair { width: 36px; justify-content: flex-start; margin-right: 2px; padding-left: 2px; box-sizing: border-box; flex: none; }
.split { width: 6px; height: 29px; margin: 0 9px 0 8px; box-sizing: border-box; border-left: 2px solid #808080; border-right: 1px solid #808080; flex: none; }
.word { width: 47px; height: 23px; margin-right: 8px; flex: none; }
.sq { width: 23px; height: 23px; flex: none; }
.pick { margin-right: 7px; }
.dash { margin: 0 2px 0 9px; width: 37px; }
.selgroup { display: flex; gap: 1px; margin-right: 7px; }

.hint { flex: none; height: 31px; box-sizing: border-box; border-top: 1px solid #fff; border-bottom: 1px solid #808080; padding-left: 187px; line-height: 30px; }

main { flex: 1; min-height: 0; display: flex; }
.vbar { flex: none; display: flex; flex-direction: column; box-sizing: border-box; overflow: hidden; border-right: 1px solid #fff; }
.vbar section { border-top: 1px solid #fff; border-bottom: 1px solid #808080; padding-bottom: 2px; }
.vcell { height: 22px; display: flex; align-items: center; }
.vcell .dd { margin-left: 1px; }
.hgrip { display: block; height: 2px; margin: 4px 3px; border: 1px solid; border-color: #fff #808080 #808080 #fff; }
.hsep { display: block; height: 2px; margin: 3px 5px; box-sizing: border-box; background: #808080; border-bottom: 1px solid #fff; }
.tick { width: 1px; height: 18px; margin-left: 4px; background: #808080; border-right: 1px solid #fff; }
.left { width: 43px; }
.left .vcell { padding-left: 2px; }
.left section { padding-bottom: 4px; flex: none; }
.left .hgrip { margin: 3px 3px 2px; }
.left section:first-child .hgrip { margin: 7px 3px; }
.mid { width: 44px; border-left: 1px solid #808080; }
.mid .vcell { padding-left: 3px; }
.mid .hgrip { margin-bottom: 5px; }
.mid section:first-child .hgrip { margin: 6px 3px 5px; }
.right { width: 30px; border-left: 1px solid #fff; border-right: 0; }
.right .vcell { padding-left: 3px; }
.right .hgrip { margin: 2px 3px 1px; }
.right section:first-child { height: 235px; flex: none; }
.right section:first-child .hgrip { margin: 4px 3px 5px; }
.right .hsep { margin: 3px 5px; }

.ops { width: 224px; flex: none; box-sizing: border-box; display: flex; flex-direction: column; padding: 0 3px 6px 1px; min-height: 0; }
.opshead { height: 18px; display: flex; align-items: center; padding: 0 0 0 3px; }
.opshead h2 { flex: 1; font-size: 11px; font-weight: 500; }
.opshead button { display: grid; place-items: center; width: 15px; }
.opshead :deep(svg) { width: 7px; height: 4px; }
.opshead .x { font: bold 10px/16px "DejaVu Sans Mono", monospace; }
.tabs { display: flex; align-items: flex-end; height: 24px; border-bottom: 1px solid #fff; flex: none; box-sizing: border-box; }
.tabs button { height: 20px; padding: 0 4px; border: 1px solid; border-color: #fff #404040 transparent #fff; box-sizing: border-box; box-shadow: inset -1px 0 #808080; }
.tabs button:last-child { padding: 0 10px 0 4px; }
.tabs .on { height: 23px; padding: 0 6px 0 5px; margin-bottom: -1px; background: #d4d0c8; }
.oprow { height: 31px; display: flex; align-items: center; overflow: hidden; border-bottom: 1px solid #808080; box-shadow: 0 1px #fff; box-sizing: border-box; padding-left: 6px; flex: none; }
.oprow:nth-child(4) { border: 0; box-shadow: none; }
.oprow .vsep { height: 20px; margin: 0 2px; }
.g1 { font: bold 14px/16px "Liberation Serif", serif; color: #808080; text-shadow: 1px 1px #fff; }
.treebox { flex: 1; min-height: 0; margin: 5px 4px 0 3px; display: flex; flex-direction: column; border: 1px solid; border-color: #808080 #fff #fff #808080; box-shadow: inset 1px 1px #404040; padding: 1px; }
.tree { flex: 1; background: #00ff42; position: relative; overflow: hidden; }
.wires { position: absolute; left: 0; top: 0; }
.node { position: relative; height: 16px; display: flex; align-items: center; white-space: nowrap; color: #063006; }
.node :deep(.ico) { width: 17px; height: 16px; }
.ex { width: 21px; padding-left: 0; flex: none; display: grid; place-items: center; }
.ex button { width: 9px; height: 9px; box-sizing: border-box; border: 1px solid #004000; background: #00ff42; display: grid; }
.ex svg { width: 7px; height: 7px; }
.lv1 { padding-left: 19px; }
.lv2 { padding-left: 38px; }
.lv3 { padding-left: 57px; }
.lab { padding: 0 2px; margin-left: 2px; line-height: 15px; }
.sel { background: #0a246a; color: #fff; margin-left: 1px; flex: 1; }
.scroll { height: 16px; display: flex; background: repeating-conic-gradient(#fff 0 25%, #d4d0c8 0 50%) 0 0 / 2px 2px; }
.scroll button { width: 16px; }
.scroll svg { width: 4px; height: 7px; }
.scroll .thumb { width: 71px; }
.scroll i { flex: 1; }

.view { flex: 1; min-width: 0; background: #000; }
.view svg { display: block; width: 100%; height: 100%; }
.ax text { font: bold 10px "DejaVu Sans Mono", monospace; text-anchor: middle; dominant-baseline: central; }
.ax .cn { font: 12px "Noto Sans CJK SC", sans-serif; }
.info text { font: bold 13px "Liberation Mono", "Noto Sans CJK SC", monospace; }
.len { font: bold 12px "Liberation Mono", monospace; }

.status { height: 29px; flex: none; display: flex; align-items: center; padding-left: 128px; border-top: 1px solid #fff; border-bottom: 1px solid #fff; box-sizing: border-box; }
.cell { height: 23px; box-sizing: border-box; border: 1px solid; border-color: #808080 #fff #fff #808080; margin-right: 3px; flex: none; display: flex; align-items: center; justify-content: center; }
.c3d { width: 29px; }
.c4 { width: 53px; }
.cz { width: 21px; margin-right: 0; border-right: 0; justify-content: flex-end; }
.depth { width: 108px; margin-right: 5px; background: #ffff80; flex: none; padding: 1px; }
.yl { flex: 1; display: flex; min-width: 0; }
.depth input { flex: none; width: 21px; font-weight: bold; font-size: 14px; background: #0a246a; color: #fff; }
.color { width: 72px; justify-content: flex-start; margin-right: 2px; }
.green { width: 54px; height: 19px; background: #0f0; border-right: 1px solid #808080; box-sizing: border-box; color: #034003; }
.color .dd { width: 16px; }
.color .dd :deep(svg) { width: 9px; height: 8px; }
.level { width: 179px; justify-content: space-between; padding: 0 0 0 8px; margin-right: 3px; }
.level .combo { width: 143px; height: 20px; }
.mono { font: 10px "DejaVu Sans Mono", monospace; }
.attr { width: 42px; }
.pt { width: 32px; margin-right: 7px; flex: none; align-items: stretch; }
.pt svg { flex: 1; min-width: 0; }
.ln { width: 60px; margin-right: 7px; flex: none; }
.ln i { flex: 1; align-self: center; height: 1px; background: #000; margin-right: 1px; }
.ln .thick { height: 3px; }
.wd { width: 62px; margin-right: 5px; }
.wcs { width: 47px; }
.grp { width: 53px; }
.ex1 { width: 22px; }
.last { justify-content: flex-start; padding-left: 5px; }

.task { height: 28px; flex: none; display: flex; align-items: center; padding: 0 2px; box-sizing: border-box; }
.start { width: 47px; height: 22px; font-weight: 500; gap: 2px; }
.quick { display: flex; align-items: center; padding-left: 4px; width: 94px; box-sizing: border-box; flex: none; }
.quick button { width: 23px; display: grid; place-items: center; }
.quick b { margin-left: 8px; }
.app1 { width: 160px; height: 22px; justify-content: flex-start; padding: 0 4px; gap: 4px; margin-right: 3px; flex: none; }
.active { display: flex; align-items: center; box-sizing: border-box; border: 1px solid; border-color: #404040 #fff #fff #404040; background: repeating-conic-gradient(#fff 0 25%, #d4d0c8 0 50%) 0 0 / 2px 2px; }
.ch { margin-left: auto; margin-right: 2px; width: 16px; height: 16px; display: grid; place-items: center; background: #0a246a; color: #fff; }
.tray { display: flex; align-items: center; height: 22px; width: 152px; box-sizing: border-box; border: 1px solid; border-color: #808080 #fff #fff #808080; padding: 0 6px 0 4px; flex: none; }
.tray b { width: 12px; }
.tray time { margin-left: auto; }
</style>
